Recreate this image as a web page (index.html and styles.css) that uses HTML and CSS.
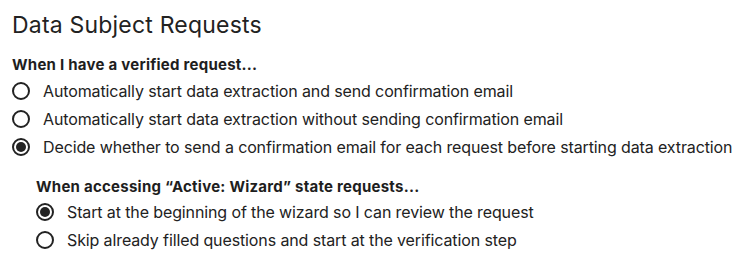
FILE: index.html
```html
<!DOCTYPE html>
<html lang="en">
<head>
<meta charset="utf-8">
<title>Data Subject Requests</title>
<link rel="stylesheet" href="styles.css">
</head>
<body>
<main class="page">
  <h1 class="title">Data Subject Requests</h1>
  <section class="group">
    <h2 class="group-title">When I have a verified request...</h2>
    <label class="option"><input type="radio" name="verified" class="radio"><span>Automatically start data extraction and send confirmation email</span></label>
    <label class="option"><input type="radio" name="verified" class="radio"><span>Automatically start data extraction without sending confirmation email</span></label>
    <label class="option"><input type="radio" name="verified" class="radio" checked><span>Decide whether to send a confirmation email for each request before starting data extraction</span></label>
  </section>
  <section class="group sub">
    <h2 class="group-title">When accessing “Active: Wizard” state requests...</h2>
    <label class="option"><input type="radio" name="wizard" class="radio" checked><span>Start at the beginning of the wizard so I can review the request</span></label>
    <label class="option"><input type="radio" name="wizard" class="radio"><span>Skip already filled questions and start at the verification step</span></label>
  </section>
</main>
</body>
</html>
```
FILE: styles.css
```css
html, body {
  margin: 0;
  padding: 0;
  background: #ffffff;
}
body {
  font-family: "Inter", "Liberation Sans", sans-serif;
  color: #222222;
}
.page {
  padding: 9px 0 0 12px;
}
.title {
  margin: 0;
  font-size: 23px;
  line-height: 32px;
  font-weight: 400;
  letter-spacing: 0.2px;
  color: #222222;
}
.group {
  margin-top: 14px;
}
.group.sub {
  margin-top: 16px;
  padding-left: 24px;
}
.group-title {
  margin: 0 0 1.5px;
  font-size: 15px;
  line-height: 20px;
  font-weight: 700;
  letter-spacing: 0.25px;
  color: #1e1e1e;
}
.option {
  display: flex;
  align-items: center;
  gap: 13px;
  height: 28px;
  font-size: 16px;
  line-height: 20px;
  letter-spacing: -0.12px;
  white-space: nowrap;
}
.radio {
  appearance: none;
  -webkit-appearance: none;
  margin: 0;
  flex: none;
  width: 18px;
  height: 18px;
  box-sizing: border-box;
  border: 2px solid #222222;
  border-radius: 50%;
  display: grid;
  place-items: center;
  background: #fff;
}
.radio:checked::after {
  content: "";
  width: 10px;
  height: 10px;
  border-radius: 50%;
  background: #222222;
}
```
